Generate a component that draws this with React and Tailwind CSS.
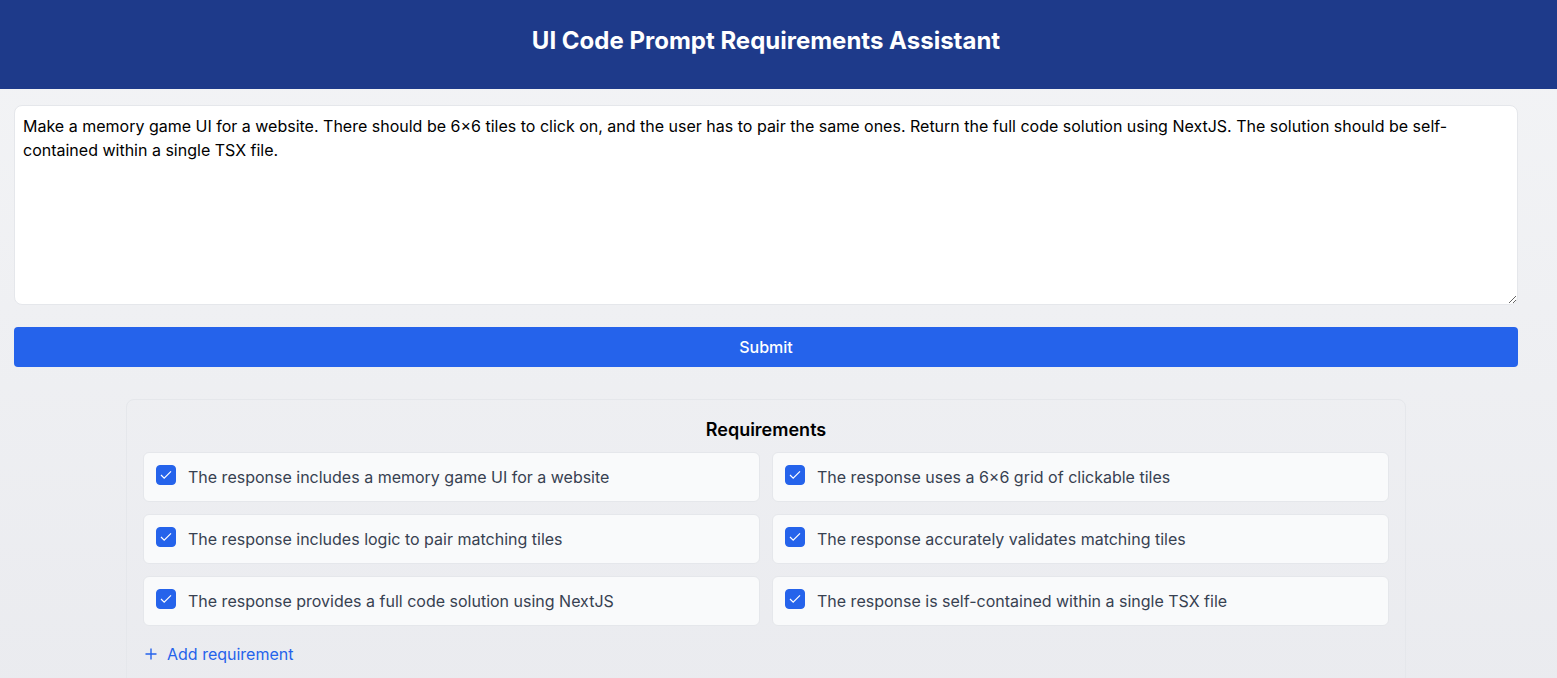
import React, { useState } from "react";

const PROMPT =
  "Make a memory game UI for a website. There should be 6×6 tiles to click on, and the user has to pair the same ones. Return the full code solution using NextJS. The solution should be self-contained within a single TSX file.";

const REQUIREMENTS = [
  "The response includes a memory game UI for a website",
  "The response uses a 6×6 grid of clickable tiles",
  "The response includes logic to pair matching tiles",
  "The response accurately validates matching tiles",
  "The response provides a full code solution using NextJS",
  "The response is self-contained within a single TSX file",
];

function Requirement({ text }) {
  return (
    <label className="flex items-start gap-3 rounded-md border border-[#e5e7eb] bg-[#f9fafb] p-3 text-[#374151]">
      <span className="grid h-5 w-5 shrink-0">
        <input
          type="checkbox"
          defaultChecked
          className="peer col-start-1 row-start-1 h-5 w-5 appearance-none rounded border border-[#2563eb] bg-white checked:bg-[#2563eb]"
        />
        <svg
          viewBox="0 0 20 20"
          className="pointer-events-none col-start-1 row-start-1 hidden h-5 w-5 peer-checked:block"
          fill="none"
          stroke="white"
          strokeWidth="1.2"
          aria-hidden="true"
        >
          <path d="M5 10 8.2 13.2 15 6.4" />
        </svg>
      </span>
      <span>{text}</span>
    </label>
  );
}

export default function App() {
  const [prompt, setPrompt] = useState(PROMPT);
  return (
    <div className="min-h-screen bg-linear-to-b from-[#f3f4f6] to-[#eaebef] font-['Inter',sans-serif] text-base text-black">
      <header className="bg-[#1e3a8a] pt-[25px] pr-[39px] pb-8 pl-[14px] text-center text-white">
        <h1 className="text-2xl font-bold">UI Code Prompt Requirements Assistant</h1>
      </header>
      <main className="pt-4 pr-[39px] pl-[14px]">
        <textarea
          aria-label="Prompt"
          value={prompt}
          onChange={(e) => setPrompt(e.target.value)}
          className="block h-[200px] w-full resize-y rounded-lg border border-[#e5e7eb] bg-white p-2 leading-6"
        />
        <button type="button" className="mt-[22px] block h-10 w-full rounded bg-[#2563eb] font-medium text-white">
          Submit
        </button>
        <section className="mx-auto mt-8 max-w-7xl rounded-lg border border-[#e5e7eb] px-4 pt-4 pb-8">
          <h2 className="mb-2 text-center text-lg leading-7 font-semibold">Requirements</h2>
          <div className="grid grid-cols-2 gap-3">
            {REQUIREMENTS.map((text) => (
              <Requirement key={text} text={text} />
            ))}
          </div>
          <button type="button" className="mt-4 flex items-center gap-2 text-[#2563eb]">
            <svg viewBox="0 0 16 16" className="h-4 w-4" fill="none" stroke="currentColor" strokeWidth="1.4" aria-hidden="true">
              <path d="M8 2.5v11M2.5 8h11" />
            </svg>
            Add requirement
          </button>
        </section>
      </main>
    </div>
  );
}
